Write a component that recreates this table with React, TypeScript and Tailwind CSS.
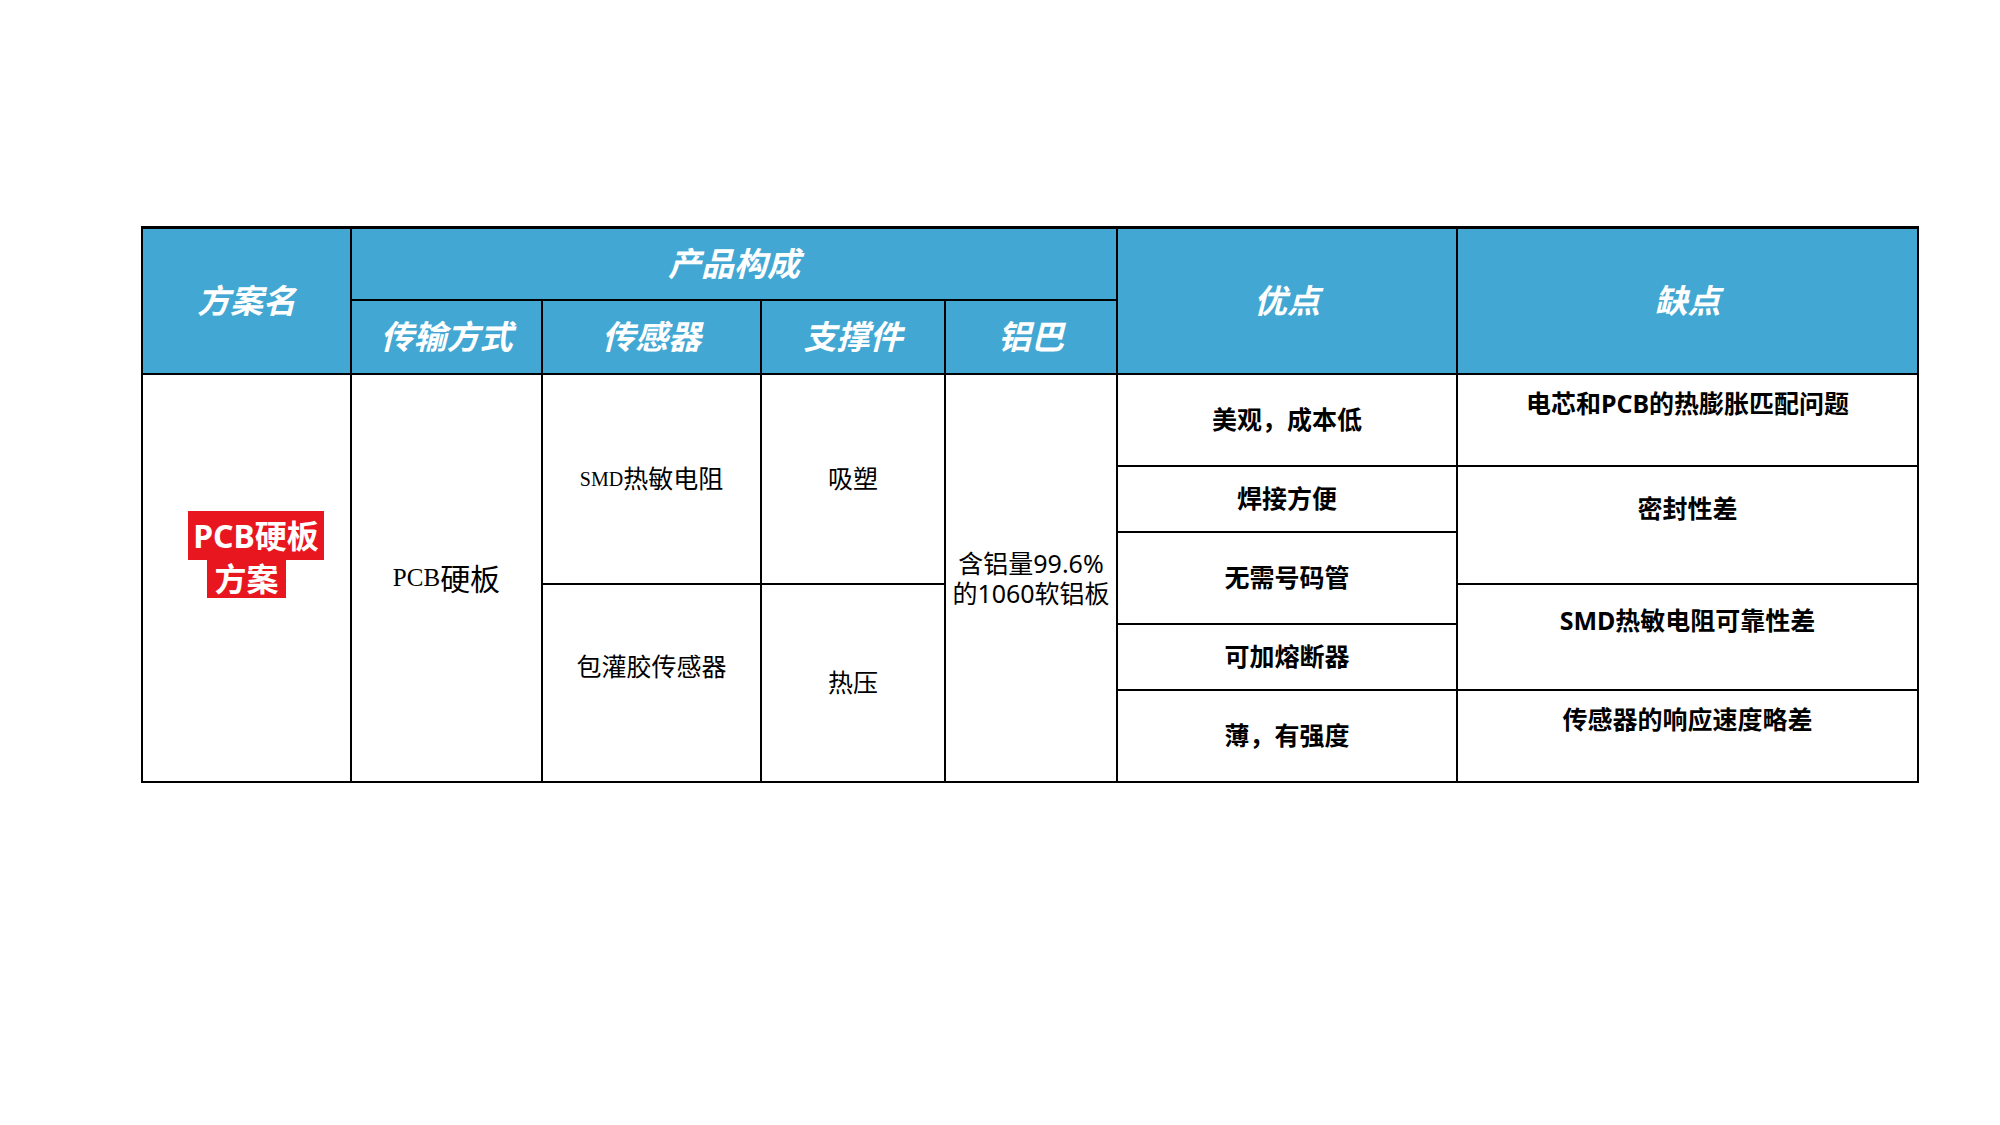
import React from 'react'

const sans = "font-['Noto_Sans','Noto_Sans_CJK_SC',sans-serif]"

// header cell, blue with bold italic white text
const Head = ({ text, className }: { text: string; className: string }) => (
  <div
    className={`flex items-center justify-center bg-[#42a8d3] text-[33px] font-bold italic text-white ${sans} ${className}`}
  >
    {text}
  </div>
)

const Cell = ({
  children,
  className,
}: {
  children: React.ReactNode
  className: string
}) => (
  <div className={`flex items-center justify-center bg-white text-center text-black ${sans} ${className}`}>
    {children}
  </div>
)

export default function App() {
  return (
    <div className="h-[1125px] w-[2000px] overflow-hidden bg-white pt-[226px] pl-[141px]">
      <div className="grid w-fit grid-cols-[207px_189px_217px_182px_170px_338px_459px] grid-rows-[70px_72px_90px_64px_50px_38px_64px_90px] gap-[2px] border-x-2 border-t-[3px] border-b-2 border-black bg-black">
        {/* header */}
        <Head className="col-start-1 row-span-2 row-start-1" text="方案名" />
        <Head className="col-span-4 col-start-2 row-start-1" text="产品构成" />
        <Head className="col-start-6 row-span-2 row-start-1" text="优点" />
        <Head className="col-start-7 row-span-2 row-start-1" text="缺点" />
        <Head className="col-start-2 row-start-2" text="传输方式" />
        <Head className="col-start-3 row-start-2" text="传感器" />
        <Head className="col-start-4 row-start-2" text="支撑件" />
        <Head className="col-start-5 row-start-2" text="铝巴" />

        {/* 方案名 */}
        <Cell className="col-start-1 row-span-6 row-start-3 flex-col pb-[47px]">
          <span className="ml-[19px] h-[49px] bg-[#e8171f] px-[5px] text-[32px] leading-[49px] font-bold text-white">
            PCB硬板
          </span>
          <span className="h-[38px] bg-[#e8171f] px-[7px] text-[32px] leading-[38px] font-bold text-white">
            方案
          </span>
        </Cell>

        {/* 产品构成 */}
        <Cell className="col-start-2 row-span-6 row-start-3 text-[30px]">
          <span className="font-['Liberation_Serif',serif] text-[25px]">PCB</span>
          <span>硬板</span>
        </Cell>
        <Cell className="col-start-3 row-span-3 row-start-3 text-[25px]">
          <span className="font-['Liberation_Serif',serif] text-[20px]">SMD</span>
          <span>热敏电阻</span>
        </Cell>
        <Cell className="col-start-3 row-span-3 row-start-6 pb-8 text-[25px]">包灌胶传感器</Cell>
        <Cell className="col-start-4 row-span-3 row-start-3 text-[25px]">吸塑</Cell>
        <Cell className="col-start-4 row-span-3 row-start-6 text-[25px]">热压</Cell>
        <Cell className="col-start-5 row-span-6 row-start-3 flex-col text-[25px] leading-[30px]">
          <span>含铝量99.6%</span>
          <span>的1060软铝板</span>
        </Cell>

        {/* 优点 */}
        <Cell className="col-start-6 row-start-3 text-[25px] font-bold">美观，成本低</Cell>
        <Cell className="col-start-6 row-start-4 text-[25px] font-bold">焊接方便</Cell>
        <Cell className="col-start-6 row-span-2 row-start-5 text-[25px] font-bold">无需号码管</Cell>
        <Cell className="col-start-6 row-start-7 text-[25px] font-bold">可加熔断器</Cell>
        <Cell className="col-start-6 row-start-8 text-[25px] font-bold">薄，有强度</Cell>

        {/* 缺点 */}
        <Cell className="col-start-7 row-start-3 pb-8 text-[25px] font-bold">电芯和PCB的热膨胀匹配问题</Cell>
        <Cell className="col-start-7 row-span-2 row-start-4 pb-8 text-[25px] font-bold">密封性差</Cell>
        <Cell className="col-start-7 row-span-2 row-start-6 pb-8 text-[25px] font-bold">SMD热敏电阻可靠性差</Cell>
        <Cell className="col-start-7 row-start-8 pb-8 text-[25px] font-bold">传感器的响应速度略差</Cell>
      </div>
    </div>
  )
}
